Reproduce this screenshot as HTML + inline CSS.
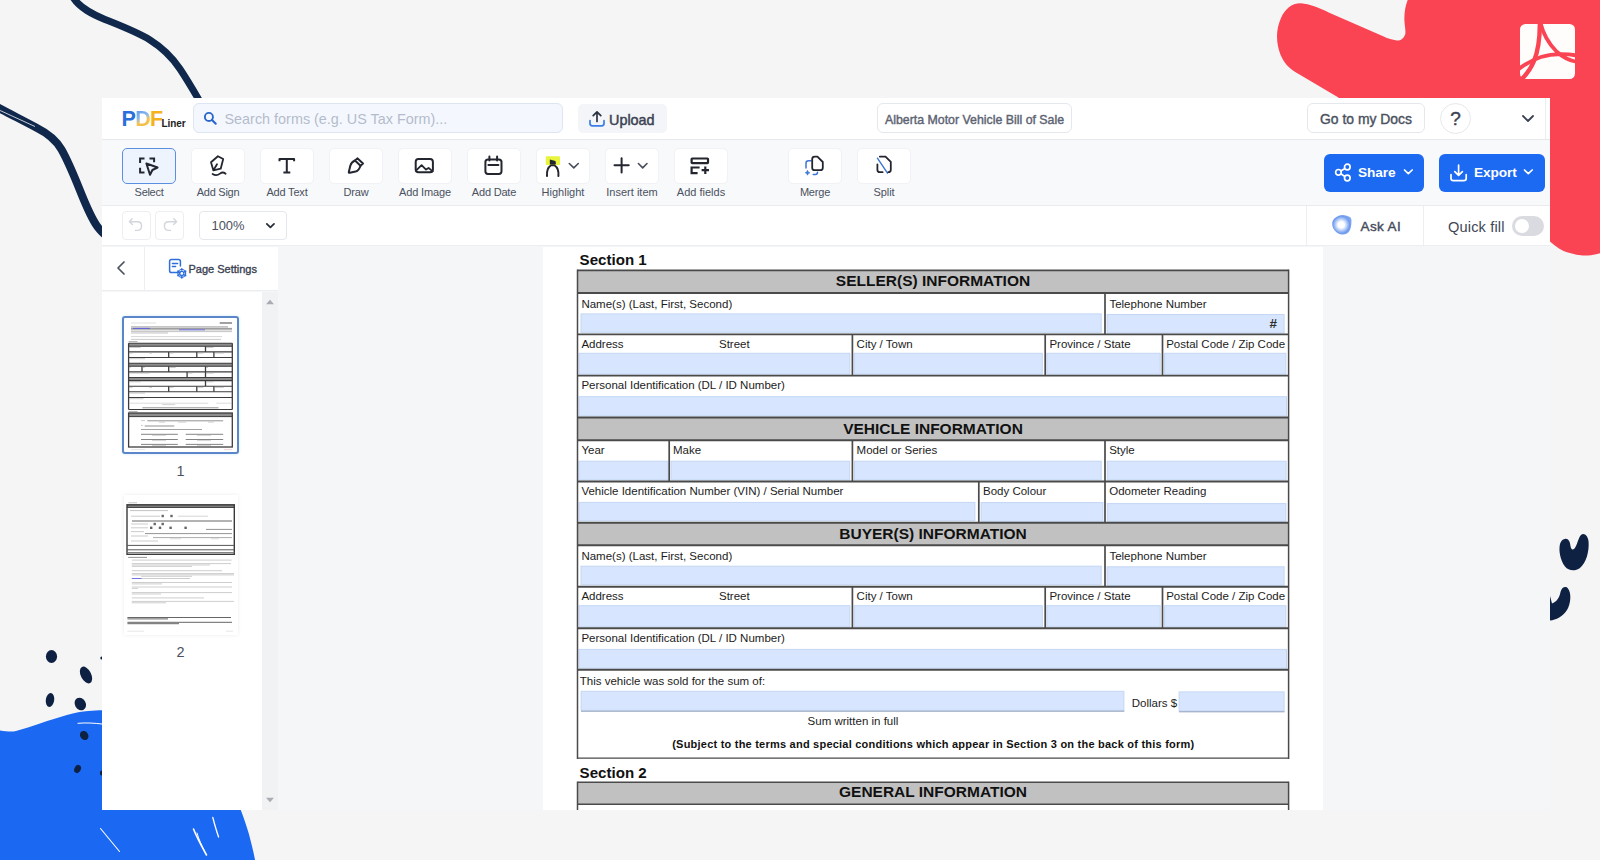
<!DOCTYPE html>
<html lang="en">
<head>
<meta charset="utf-8">
<title>Alberta Motor Vehicle Bill of Sale - PDFLiner</title>
<style>
*{box-sizing:border-box;margin:0;padding:0}
html,body{width:1600px;height:860px;overflow:hidden;background:#f5f5f5;font-family:"Liberation Sans",sans-serif;color:#3b4252}
.abs{position:absolute}
#bg{position:absolute;left:0;top:0;width:1600px;height:860px}
#app{position:absolute;left:102px;top:98px;width:1448px;height:712px;background:#f4f6f8;overflow:hidden}
#hdr{position:absolute;left:0;top:0;width:1448px;height:42px;background:#fff;border-bottom:1px solid #e6e8ec}
#tools{position:absolute;left:0;top:42px;width:1448px;height:66px;background:#f8f9fb;border-bottom:1px solid #e9ebef}
#row3{position:absolute;left:0;top:108px;width:1448px;height:40px;background:#fff;border-bottom:1px solid #eceef1}
.tb{position:absolute;top:8px;width:54px;height:36px;background:#fff;border:1px solid #f0f2f5;border-radius:5px}
.tb.sel{background:#eef4fe;border:1px solid #5b8fe0}
.tl{position:absolute;top:45.5px;width:90px;text-align:center;font-size:11px;color:#4a5160;letter-spacing:.1px}
.tb svg{position:absolute;left:0;top:0}

#logo{position:absolute;left:20px;top:9px;height:24px;white-space:nowrap}
#logo .p{position:absolute;left:-.5px;top:-.5px;font-size:21.5px;font-weight:700;letter-spacing:-.7px;line-height:24px}
#logo .l{position:absolute;left:39.5px;top:11px;font-size:10px;font-weight:700;color:#222;line-height:12px;letter-spacing:-.1px}
#search{position:absolute;left:91px;top:5px;width:370px;height:30px;background:#f4f8fe;border:1px solid #dde5f0;border-radius:6px}
#search span{position:absolute;left:30.5px;top:1px;line-height:28px;font-size:14.4px;color:#b4bccb;white-space:nowrap}
#upload{position:absolute;left:476px;top:6px;width:89px;height:29px;background:#f3f5f8;border-radius:5px}
#upload span{position:absolute;left:31px;top:1.5px;line-height:29px;font-size:14.4px;font-weight:400;color:#3b4252;-webkit-text-stroke:.45px #3b4252}
#title{position:absolute;left:775px;top:5px;width:195px;height:30px;border:1px solid #e4e7ec;border-radius:6px;background:#fff}
#title span{position:absolute;left:7px;top:2px;line-height:28px;font-size:12.35px;font-weight:400;color:#5c6372;white-space:nowrap;-webkit-text-stroke:.4px #5c6372}
#docs{position:absolute;left:1205px;top:5px;width:118px;height:30px;border:1px solid #e4e7ec;border-radius:6px;background:#fff}
#docs span{position:absolute;left:0;width:116px;text-align:center;top:.5px;line-height:28px;font-size:13.9px;font-weight:400;color:#4a5160;white-space:nowrap;-webkit-text-stroke:.4px #4a5160}
#help{position:absolute;left:1338px;top:5px;width:31px;height:31px;border:1px solid #e6e8ec;border-radius:50%;background:#fff;text-align:center;line-height:29px;font-size:19px;color:#3b4252;-webkit-text-stroke:.4px #3b4252}

.bb{position:absolute;top:14px;height:38px;background:#1c69f2;border-radius:6px}
.bb span{position:absolute;top:-.5px;line-height:37px;font-size:13.7px;font-weight:700;color:#fff;letter-spacing:-.1px}

.ur{position:absolute;top:5px;width:29px;height:29px;border:1px solid #eceef1;border-radius:4px;background:#fff}
#zoom{position:absolute;left:97px;top:5px;width:88px;height:29px;border:1px solid #e4e7ec;border-radius:4px;background:#fff}
#zoom span{position:absolute;left:11.5px;top:-.5px;line-height:27px;font-size:12.9px;color:#4a5160}
.vs{position:absolute;top:0;width:1px;height:40px;background:#eceef1}
#askai{position:absolute;left:1258.5px;top:.5px;line-height:40px;font-size:13.5px;letter-spacing:.4px;font-weight:400;color:#444b5a;-webkit-text-stroke:.4px #444b5a}
#qf{position:absolute;left:1346px;top:.5px;line-height:40px;font-size:14.6px;color:#3f4656;letter-spacing:.15px}
#tog{position:absolute;left:1410px;top:10px;width:32px;height:20px;border-radius:10px;background:#d9dbe0}
#tog i{position:absolute;left:3px;top:3px;width:14px;height:14px;border-radius:50%;background:#fff}
#side{position:absolute;left:0;top:149px;width:176px;height:563px}
#sidehdr{position:absolute;left:0;top:0;width:176px;height:44px;background:#fff;border-bottom:1px solid #eceef1}
#sidebody{position:absolute;left:0;top:45px;width:160px;height:518px;background:#fff}
#sidescroll{position:absolute;left:160px;top:45px;width:16px;height:518px;background:#f1f2f4}
#ps{position:absolute;left:86.5px;top:1px;line-height:43px;font-size:11px;font-weight:400;color:#3b4252;white-space:nowrap;-webkit-text-stroke:.35px #3b4252}
.pn{position:absolute;left:0;width:157px;text-align:center;font-size:14.5px;color:#4a5160;line-height:16px}
#main{position:absolute;left:441px;top:149px;width:780px;height:563px;background:#fff;overflow:hidden}

.fl{position:absolute;font-size:11.5px;line-height:13px;color:#1c1c1c;white-space:nowrap}
.fh{position:absolute;left:34.5px;width:711px;text-align:center;font-size:15.5px;font-weight:700;line-height:18px;color:#111;white-space:nowrap}
.fs{position:absolute;font-size:15.1px;font-weight:700;line-height:17px;color:#111;white-space:nowrap}
.fb{position:absolute;font-size:11px;font-weight:700;line-height:13px;color:#111;white-space:nowrap;letter-spacing:.225px}
</style>
</head>
<body>
<svg id="bg" viewBox="0 0 1600 860">
<path d="M73.5 -2 C80 8 92 14 105 19.5 C121 26 137 32 150 40 C166 50 174 60 180 69 C186 78 192 88 199 100" fill="none" stroke="#10284c" stroke-width="7" stroke-linecap="round"/>
<path d="M-3 107 C8 113 26 122 37 128 C47 133 56 140 61.5 149.5 C68 161 75 178 80 190.5 C85 203 92 219 97 226 C99 229 101 231 104 234" fill="none" stroke="#10284c" stroke-width="8" stroke-linecap="round"/>
<path d="M-1 110 L35 126.5" fill="none" stroke="#f5f5f5" stroke-width="0.8"/>
<path d="M1408.5 -2 C1405 6 1404 14 1404.5 22 C1405 28 1406 32 1405 35 C1403 39 1400 41 1397 40.5 C1390 39 1386 37.5 1383.7 36.4 L1328.7 12.4 C1318 7.5 1310 4 1301 3.3 C1292 3 1285 9 1281 18 C1276 29 1275.5 42 1280.6 55 C1284 63 1289 68 1294.4 71.5 L1338.4 97.6 L1338.4 130 L1550 130 L1550 241.5 C1553 244 1556 246.5 1559 248.5 C1562 250.5 1565 251.6 1568 252.4 C1573 253.8 1578 255.2 1583 255.5 C1589 255.8 1595 254.8 1602 252.6 L1602 -2 Z" fill="#fb4453"/>
<rect x="1520" y="24" width="55" height="55" rx="5.5" fill="#fffdfb"/>
<g fill="none" stroke="#fb4453" stroke-linecap="butt">
<path d="M1539.8 22 C1540 38 1538.5 50 1534 61 C1531 68.5 1526.5 74.5 1521 80" stroke-width="4.4"/>
<path d="M1540.5 23 C1543.5 35 1549 44 1556.5 51.5 C1562.5 57 1569 60.5 1577 62" stroke-width="3.8"/>
<path d="M1518.5 69.2 C1526 63.5 1533 59.5 1541 57 C1552 53.6 1564 53.4 1577 55.5" stroke-width="3.8"/>
</g>
<path d="M-2 730.3 C6 731.5 12 732 16 731 C24 729 32 726.5 40 723.6 C50 720 58 717.5 66.9 715 C75 712.8 82 711.5 88.3 711 C93 710.5 98 710.2 104 710.2 L104 808 L240 808 C244 818 246.5 826 248.7 833.3 C251 842 253.5 851 255.4 862 L-2 862 Z" fill="#1b68f3"/>
<g fill="#0e2142">
<ellipse cx="51.5" cy="656.5" rx="5.6" ry="6.4"/>
<ellipse cx="86" cy="675" rx="5.2" ry="9" transform="rotate(-27 86 675)"/>
<ellipse cx="50" cy="700" rx="4.2" ry="7" transform="rotate(8 50 700)"/>
<ellipse cx="80.3" cy="704" rx="5.4" ry="6.6" transform="rotate(-30 80.3 704)"/>
<ellipse cx="84.2" cy="735.5" rx="4" ry="4.8" transform="rotate(-35 84.2 735.5)"/>
<ellipse cx="77.6" cy="769" rx="3.2" ry="4.2" transform="rotate(25 77.6 769)"/>
<ellipse cx="101.5" cy="773" rx="1.6" ry="2.6"/>
<ellipse cx="101.5" cy="658" rx="1.2" ry="1.6"/>
<path d="M1564.7 539 C1568 538 1570 541 1570.5 546 C1571 549.5 1572.5 550.5 1574.5 548.5 C1577.5 545 1578 538 1581 535 C1584 532.5 1588 535.5 1588.6 542 C1589.3 552 1586 563 1580 568 C1575 571.5 1568.5 571 1565 566.5 C1560 560 1558.5 550 1560 544 C1561 541 1562.5 539.6 1564.7 539 Z"/>
<path d="M1550 596 L1550 620.5 C1556 620 1563 616.5 1567 610 C1571 603.5 1571.5 593 1568 588.5 C1565.5 585.5 1561.5 587.5 1560.5 592 C1559.5 597.5 1556.5 602 1552 603.5 Z"/>
</g>
<g stroke="#ffffff" fill="none" stroke-linecap="round">
<path d="M78 723.3 C86 722.6 94 723 102 724" stroke-width="1"/>
<path d="M100.5 828.5 L119.5 851.5" stroke-width="1.1"/>
<path d="M193.5 829 C197 838 202 847 206.5 855" stroke-width="1.6"/>
<path d="M197 833 C199 840 202 846 204.5 851" stroke-width="1"/>
<path d="M212.8 817.5 C214.5 824 216.5 831 218.6 837" stroke-width="1.3"/>
</g>
</svg>
<div id="app">
  <div id="hdr">
    <div id="logo"><span class="p"><span style="color:#2a6fdb">P</span><span style="background:linear-gradient(155deg,#4f8fe3 0%,#8bb8ee 42%,#f3c45a 58%,#f5b21f 100%);-webkit-background-clip:text;background-clip:text;color:transparent">D</span><span style="color:#f5b21f">F</span></span><span class="l">Liner</span></div>
    <div id="search"><svg class="abs" style="left:8.8px;top:7.2px" width="15" height="15" viewBox="0 0 16 16"><circle cx="6.3" cy="6.3" r="4.3" fill="none" stroke="#2b66cc" stroke-width="2"/><path d="M9.6 9.6 L13.6 13.6" stroke="#2b66cc" stroke-width="2.2" stroke-linecap="round"/></svg><span>Search forms (e.g. US Tax Form)...</span></div>
    <div id="upload"><svg class="abs" style="left:10px;top:6px" width="18" height="18" viewBox="0 0 18 18" fill="none" stroke-linecap="round" stroke-linejoin="round"><path d="M2 10.5 V13.5 Q2 15.8 4.3 15.8 H13.7 Q16 15.8 16 13.5 V10.5" stroke="#3b7ee6" stroke-width="1.7"/><path d="M9 11.5 V2 M5.2 5.6 L9 1.8 L12.8 5.6" stroke="#2c3140" stroke-width="1.7"/></svg><span>Upload</span></div>
    <div id="title"><span>Alberta Motor Vehicle Bill of Sale</span></div>
    <div id="docs"><span>Go to my Docs</span></div>
    <div id="help">?</div>
    <svg class="abs" style="left:1420px;top:17px" width="12" height="8" viewBox="0 0 12 8"><path d="M1 1 L6 6 L11 1" fill="none" stroke="#3b4252" stroke-width="1.8" stroke-linecap="round" stroke-linejoin="round"/></svg>
    <div class="abs" style="left:1443px;top:0;width:1px;height:41px;background:#eceef1"></div>
  </div>
  <div id="tools"><div class="tb sel" style="left:20px"><svg width="54" height="36" viewBox="0 0 54 36" fill="none" stroke="#23262f" stroke-width="2" stroke-linecap="round" stroke-linejoin="round" style="left:-1px;top:-1px"><path d="M18.1 15 V10.6 H22.5 M27.5 10.6 H32.1 V14.2 M18.1 19.8 V24.4 H22.5" stroke-linecap="butt" stroke-linejoin="miter"/><path d="M24.4 15.5 L35.6 19.5 L30.4 22 L28 26.8 Z"/></svg></div><div class="tl" style="left:2px;letter-spacing:-0.3px">Select</div><div class="tb" style="left:89px"><svg width="54" height="36" viewBox="0 0 54 36" fill="none" stroke="#23262f" stroke-width="2" stroke-linecap="round" stroke-linejoin="round" style="left:-1px;top:-1px"><path d="M26.9 8.2 L32.2 11 L29.7 20.7 L22.4 22.4 L20 14.2 Z M26 16.3 L22.4 22.4" stroke-width="1.8"/><path d="M21.6 26 C24 27.6 27 27.2 29 25.6 C30.8 24.2 33 24.4 34.6 25.7" stroke-width="1.8"/></svg></div><div class="tl" style="left:71px;letter-spacing:-0.25px">Add Sign</div><div class="tb" style="left:158px"><svg width="54" height="36" viewBox="0 0 54 36" fill="none" stroke="#23262f" stroke-width="2" stroke-linecap="round" stroke-linejoin="round" style="left:-1px;top:-1px"><path d="M19.5 13.2 V11 H34.1 V13.2 M26.8 11 V24.4 M23.4 24.4 H30.3" stroke-width="2" stroke-linecap="butt"/></svg></div><div class="tl" style="left:140px;letter-spacing:-0.2px">Add Text</div><div class="tb" style="left:227px"><svg width="54" height="36" viewBox="0 0 54 36" fill="none" stroke="#23262f" stroke-width="2" stroke-linecap="round" stroke-linejoin="round" style="left:-1px;top:-1px"><path d="M28.6 10.4 L34 15.5 L31.5 17.7 L26 12.5 Z"/><path d="M26 12.5 C23.3 13.6 22 15.5 21.4 17.6 L19.8 23.9 Q19.6 25 20.8 24.8 L26.6 23.6 C29 22.8 30.6 20.6 31.5 17.7"/></svg></div><div class="tl" style="left:209px;letter-spacing:-0.2px">Draw</div><div class="tb" style="left:296px"><svg width="54" height="36" viewBox="0 0 54 36" fill="none" stroke="#23262f" stroke-width="2" stroke-linecap="round" stroke-linejoin="round" style="left:-1px;top:-1px"><rect x="17.7" y="10.9" width="17.2" height="13.4" rx="2.8"/><path d="M18.2 22.4 L23.6 17.1 L28 21.6 M28 21.6 L30.6 19.9 L34.6 23.4" stroke-width="1.8"/></svg></div><div class="tl" style="left:278px;letter-spacing:-0.15px">Add Image</div><div class="tb" style="left:365px"><svg width="54" height="36" viewBox="0 0 54 36" fill="none" stroke="#23262f" stroke-width="2" stroke-linecap="round" stroke-linejoin="round" style="left:-1px;top:-1px"><rect x="18.4" y="11.5" width="16.1" height="14.4" rx="2.6"/><path d="M22.4 8.4 V12.6 M30.1 8.4 V12.6 M21.4 17.1 H31.4"/></svg></div><div class="tl" style="left:347px;letter-spacing:-0.2px">Add Date</div><div class="tb" style="left:434px"><svg width="54" height="36" viewBox="0 0 54 36" fill="none" stroke="#23262f" stroke-width="2" stroke-linecap="round" stroke-linejoin="round" style="left:-1px;top:-1px"><rect x="9.8" y="8.2" width="14.2" height="8.9" rx="1" fill="#e9f53c" stroke="none"/><path d="M13.8 11.6 L19.5 13 L20 16.2 H13.8 Z" fill="#23262f" stroke="none"/><path d="M11 28 C10.5 22 13 18.6 15 17.2 L18.5 17.2 C20.5 18.6 23 22 22.4 28"/><path d="M33.3 15.5 L37.8 19.9 L42.3 15.5" stroke-width="1.6" stroke="#4a4e5a"/></svg></div><div class="tl" style="left:416px;letter-spacing:0px">Highlight</div><div class="tb" style="left:503px"><svg width="54" height="36" viewBox="0 0 54 36" fill="none" stroke="#23262f" stroke-width="2" stroke-linecap="round" stroke-linejoin="round" style="left:-1px;top:-1px"><path d="M9.5 17.3 H23.7 M16.6 10.2 V24.4"/><path d="M33.4 15.5 L37.7 19.9 L42 15.5" stroke-width="1.6" stroke="#4a4e5a"/></svg></div><div class="tl" style="left:485px;letter-spacing:0px">Insert item</div><div class="tb" style="left:572px"><svg width="54" height="36" viewBox="0 0 54 36" fill="none" stroke="#23262f" stroke-width="2" stroke-linecap="round" stroke-linejoin="round" style="left:-1px;top:-1px"><rect x="17.6" y="10.5" width="16.4" height="4.6" rx=".6" stroke-width="2.2"/><path d="M25.6 19.5 H17.6 V25.2 H23.6 M27.6 22.2 H35 M31.3 18.5 V25.9" stroke-width="2.2" stroke-linecap="butt" stroke-linejoin="miter"/></svg></div><div class="tl" style="left:554px;letter-spacing:0px">Add fields</div><div class="tb" style="left:686px"><svg width="54" height="36" viewBox="0 0 54 36" fill="none" stroke="#23262f" stroke-width="2" stroke-linecap="round" stroke-linejoin="round" style="left:-1px;top:-1px"><path d="M23 12.8 H20.5 Q18 12.8 18 15.3 V20 M25.2 26.4 H27.5 Q29.5 26.4 29.5 24.2" stroke="#3f76d6" stroke-width="1.5"/><path d="M19.5 22.4 L20.3 24 L21.9 24.8 L20.3 25.6 L19.5 27.2 L18.7 25.6 L17.1 24.8 L18.7 24 Z" fill="#3f76d6" stroke="#3f76d6" stroke-width=".6"/><path d="M26.7 8.6 H29.4 L34.8 14 V19.7 Q34.8 22.2 32.3 22.2 H26.7 Q24.2 22.2 24.2 19.7 V11.1 Q24.2 8.6 26.7 8.6 Z" fill="#fff" stroke-width="1.8"/></svg></div><div class="tl" style="left:668px;letter-spacing:-0.2px">Merge</div><div class="tb" style="left:755px"><svg width="54" height="36" viewBox="0 0 54 36" fill="none" stroke="#23262f" stroke-width="2" stroke-linecap="round" stroke-linejoin="round" style="left:-1px;top:-1px"><path d="M20.4 10.2 L30.5 25.2" stroke="#3f76d6" stroke-width="1.4"/><path stroke-width="1.8" d="M20.4 16.3 V21.7 Q20.4 24.2 23 24.2 H25.6 M22.8 8.6 H28.5 L33.8 13.8 V21.7 Q33.8 24.2 31.3 24.2"/></svg></div><div class="tl" style="left:737px;letter-spacing:-0.1px">Split</div><div class="bb" style="left:1222px;width:100px"><svg class="abs" style="left:9px;top:8px" width="22" height="22" viewBox="0 0 22 22" fill="none" stroke="#fff" stroke-width="1.7"><circle cx="14.3" cy="5" r="2.8"/><circle cx="5.4" cy="10.3" r="2.8"/><circle cx="14.3" cy="16" r="2.8"/><path d="M7.8 8.9 L11.9 6.4 M7.8 11.8 L11.9 14.5"/></svg><span style="left:34px">Share</span><svg class="abs" style="left:79px;top:14px" width="11" height="8" viewBox="0 0 11 8"><path d="M1.5 2 L5.3 5.7 L9.2 2" fill="none" stroke="#fff" stroke-width="1.7" stroke-linecap="round" stroke-linejoin="round"/></svg></div>
<div class="bb" style="left:1337px;width:106px"><svg class="abs" style="left:10px;top:8px" width="20" height="22" viewBox="0 0 20 22" fill="none" stroke="#fff" stroke-width="1.7" stroke-linecap="round" stroke-linejoin="round"><path d="M2 12.5 V16.2 Q2 18.6 4.4 18.6 H14.8 Q17.2 18.6 17.2 16.2 V12.5"/><path d="M9.6 3 V13.2 M5.8 9.6 L9.6 13.4 L13.4 9.6"/></svg><span style="left:35px">Export</span><svg class="abs" style="left:84px;top:14px" width="11" height="8" viewBox="0 0 11 8"><path d="M1.5 2 L5.3 5.7 L9.2 2" fill="none" stroke="#fff" stroke-width="1.7" stroke-linecap="round" stroke-linejoin="round"/></svg></div></div>
  <div id="row3">
    <div class="ur" style="left:20px"><svg width="27" height="27" viewBox="0 0 27 27" fill="none" stroke="#d3d6dc" stroke-width="1.4" stroke-linecap="round" stroke-linejoin="round"><path d="M9.2 6.8 L6.4 9.8 L9.4 12.6 M6.8 9.8 H14.6 Q18.6 9.8 18.6 14 Q18.6 18.4 14.4 18.4 H12.4"/></svg></div>
    <div class="ur" style="left:53px"><svg width="27" height="27" viewBox="0 0 27 27" fill="none" stroke="#d3d6dc" stroke-width="1.4" stroke-linecap="round" stroke-linejoin="round"><path d="M17.8 6.8 L20.6 9.8 L17.6 12.6 M20.2 9.8 H12.4 Q8.4 9.8 8.4 14 Q8.4 18.4 12.6 18.4 H14.6"/></svg></div>
    <div id="zoom"><span>100%</span><svg class="abs" style="left:65px;top:10px" width="12" height="8" viewBox="0 0 12 8"><path d="M1.8 1.9 L5.4 5.4 L9 1.9" fill="none" stroke="#2b2f3a" stroke-width="1.8" stroke-linecap="round" stroke-linejoin="round"/></svg></div>
    <div class="vs" style="left:1204px"></div><div class="vs" style="left:1321px"></div>
    <svg class="abs" style="left:1228px;top:7px" width="24" height="24" viewBox="0 0 24 24"><defs><radialGradient id="ai" cx="47%" cy="50%" r="52%"><stop offset="0" stop-color="#ffffff"/><stop offset=".3" stop-color="#ffffff"/><stop offset=".62" stop-color="#a9c4f6"/><stop offset=".84" stop-color="#6d9aee"/><stop offset="1" stop-color="#7fa6f0"/></radialGradient><filter id="aib" x="-10%" y="-10%" width="120%" height="120%"><feGaussianBlur stdDeviation=".45"/></filter></defs><path filter="url(#aib)" d="M8.2 2.9 C11.6 1.2 17.2 2 20.6 4.6 C21.8 6.4 21.6 9 21.2 12 C20.8 15.6 19.8 18.8 17 20.6 C13.8 22.4 9.2 21.4 6.4 19.2 C3.2 16.8 1.8 13.4 2.2 9.6 C2.6 6.6 5 4.4 8.2 2.9 Z" fill="url(#ai)"/></svg>
    <div id="askai">Ask AI</div>
    <div id="qf">Quick fill</div>
    <div id="tog"><i></i></div>
  </div>
  <div id="side">
    <div id="sidehdr">
      <svg class="abs" style="left:13px;top:13px" width="12" height="16" viewBox="0 0 12 16"><path d="M9 2 L3 8 L9 14" fill="none" stroke="#4a5160" stroke-width="1.7" stroke-linecap="round" stroke-linejoin="round"/></svg>
      <div class="abs" style="left:42px;top:0;width:1px;height:44px;background:#eceef1"></div>
      <svg class="abs" style="left:65px;top:11px" width="22" height="22" viewBox="0 0 22 22" fill="none" stroke="#2f6fdc" stroke-width="1.5" stroke-linecap="round" stroke-linejoin="round"><path d="M13 14.6 H4.4 Q2.6 14.6 2.6 12.8 V3.4 Q2.6 1.6 4.4 1.6 H11.6 Q13.4 1.6 13.4 3.4 V8"/><path d="M5.4 5.4 H10.6 M5.4 8.6 H8.6"/><circle cx="14.8" cy="15.4" r="2.1" stroke-width="1.3"/><path d="M14.8 10.9 V12 M14.8 18.8 V19.9 M10.9 13.2 L11.9 13.8 M17.7 17 L18.7 17.6 M10.9 17.6 L11.9 17 M17.7 13.8 L18.7 13.2" stroke-width="1.6"/><circle cx="14.8" cy="15.4" r="3.9" stroke-width="1.2"/></svg>
      <div id="ps">Page Settings</div>
    </div>
    <div id="sidebody"><!--TH--><div class="abs" style="left:20px;top:24px;width:117px;height:138px;border:2px solid #5b87c8;border-radius:3px;box-shadow:0 0 3px rgba(120,200,230,.35);background:#fff"></div>
<svg class="abs" style="left:0;top:0" width="160" height="200" viewBox="0 0 160 200" fill="none"><rect x="26.6" y="51.2" width="103.7" height="3.1" fill="#8d8d8d"/><rect x="26.6" y="71.2" width="103.7" height="3.1" fill="#8d8d8d"/><rect x="26.6" y="85.5" width="103.7" height="3.1" fill="#8d8d8d"/><path d="M26.6 51.2 H130.3" stroke="#3c3c3c" stroke-width="1.1"/><path d="M26.6 54.3 H130.3" stroke="#3c3c3c" stroke-width="1.1"/><path d="M26.6 59.9 H130.3" stroke="#3c3c3c" stroke-width="1.1"/><path d="M26.6 65.5 H130.3" stroke="#3c3c3c" stroke-width="1.1"/><path d="M26.6 71.2 H130.3" stroke="#3c3c3c" stroke-width="1.1"/><path d="M26.6 74.3 H130.3" stroke="#3c3c3c" stroke-width="1.1"/><path d="M26.6 79.9 H130.3" stroke="#3c3c3c" stroke-width="1.1"/><path d="M26.6 85.5 H130.3" stroke="#3c3c3c" stroke-width="1.1"/><path d="M26.6 88.6 H130.3" stroke="#3c3c3c" stroke-width="1.1"/><path d="M26.6 94.2 H130.3" stroke="#3c3c3c" stroke-width="1.1"/><path d="M26.6 99.8 H130.3" stroke="#3c3c3c" stroke-width="1.1"/><path d="M26.6 105.5 H130.3" stroke="#3c3c3c" stroke-width="1.1"/><path d="M26.6 117.5 H130.3" stroke="#3c3c3c" stroke-width="1.1"/><path d="M26.6 51.2 V117.5" stroke="#3c3c3c" stroke-width="1.3"/><path d="M130.3 51.2 V117.5" stroke="#3c3c3c" stroke-width="1.3"/><path d="M103.5 54.3 V59.9" stroke="#3c3c3c" stroke-width="1.3"/><path d="M103.5 88.6 V94.2" stroke="#3c3c3c" stroke-width="1.3"/><path d="M66.7 59.9 V65.5" stroke="#3c3c3c" stroke-width="1.3"/><path d="M94.8 59.9 V65.5" stroke="#3c3c3c" stroke-width="1.3"/><path d="M111.9 59.9 V65.5" stroke="#3c3c3c" stroke-width="1.3"/><path d="M66.7 94.2 V99.8" stroke="#3c3c3c" stroke-width="1.3"/><path d="M94.8 94.2 V99.8" stroke="#3c3c3c" stroke-width="1.3"/><path d="M111.9 94.2 V99.8" stroke="#3c3c3c" stroke-width="1.3"/><path d="M40.0 74.3 V79.9" stroke="#3c3c3c" stroke-width="1.3"/><path d="M66.7 74.3 V79.9" stroke="#3c3c3c" stroke-width="1.3"/><path d="M103.5 74.3 V79.9" stroke="#3c3c3c" stroke-width="1.3"/><path d="M85.1 79.9 V85.5" stroke="#3c3c3c" stroke-width="1.3"/><path d="M103.5 79.9 V85.5" stroke="#3c3c3c" stroke-width="1.3"/><path d="M27.1 55.5 H38.6" stroke="#a8a8a8" stroke-width="0.6"/><path d="M104.1 55.5 H111.5" stroke="#a8a8a8" stroke-width="0.6"/><path d="M27.1 61.1 H30.6" stroke="#a8a8a8" stroke-width="0.6"/><path d="M47.2 61.1 H50.0" stroke="#a8a8a8" stroke-width="0.6"/><path d="M67.4 61.1 H71.4" stroke="#a8a8a8" stroke-width="0.6"/><path d="M95.3 61.1 H101.3" stroke="#a8a8a8" stroke-width="0.6"/><path d="M112.4 61.1 H121.7" stroke="#a8a8a8" stroke-width="0.6"/><path d="M27.1 66.7 H43.0" stroke="#a8a8a8" stroke-width="0.6"/><path d="M27.1 75.5 H28.7" stroke="#a8a8a8" stroke-width="0.6"/><path d="M40.5 75.5 H42.7" stroke="#a8a8a8" stroke-width="0.6"/><path d="M67.4 75.5 H73.6" stroke="#a8a8a8" stroke-width="0.6"/><path d="M104.1 75.5 H106.0" stroke="#a8a8a8" stroke-width="0.6"/><path d="M27.1 81.1 H47.4" stroke="#a8a8a8" stroke-width="0.6"/><path d="M85.7 81.1 H90.4" stroke="#a8a8a8" stroke-width="0.6"/><path d="M104.1 81.1 H111.5" stroke="#a8a8a8" stroke-width="0.6"/><path d="M27.1 89.8 H38.6" stroke="#a8a8a8" stroke-width="0.6"/><path d="M104.1 89.8 H111.5" stroke="#a8a8a8" stroke-width="0.6"/><path d="M27.1 95.4 H30.6" stroke="#a8a8a8" stroke-width="0.6"/><path d="M47.2 95.4 H50.0" stroke="#a8a8a8" stroke-width="0.6"/><path d="M67.4 95.4 H71.4" stroke="#a8a8a8" stroke-width="0.6"/><path d="M95.3 95.4 H101.3" stroke="#a8a8a8" stroke-width="0.6"/><path d="M112.4 95.4 H121.7" stroke="#a8a8a8" stroke-width="0.6"/><path d="M27.1 101.1 H43.0" stroke="#a8a8a8" stroke-width="0.6"/><path d="M27.1 106.7 H41.5" stroke="#a8a8a8" stroke-width="0.6"/><path d="M27.1 111.2 H106.3" stroke="#b5b5b5" stroke-width="0.5"/><path d="M114.3 111.2 H129.6" stroke="#b5b5b5" stroke-width="0.5"/><path d="M60.2 112.6 H73.2" stroke="#a8a8a8" stroke-width="0.5"/><path d="M40.4 115.8 H116.5" stroke="#666" stroke-width="0.7"/><path d="M26.6 49.6 h9" stroke="#777" stroke-width=".6"/><path d="M26.6 119.6 h9" stroke="#777" stroke-width=".6"/><rect x="26.6" y="121.0" width="103.7" height="3.6" fill="#8d8d8d"/><rect x="26.6" y="121.0" width="103.7" height="34.0" fill="none" stroke="#3c3c3c" stroke-width="1.3"/><path d="M26.6 124.6 H130.3" stroke="#3c3c3c" stroke-width="1"/><path d="M45.3 128.8 H121.2" stroke="#777" stroke-width="0.8"/><path d="M39.0 128.6 H43.0" stroke="#a8a8a8" stroke-width="0.6"/><path d="M57.0 130.2 H63.0" stroke="#a8a8a8" stroke-width="0.5"/><path d="M76.0 130.2 H84.0" stroke="#a8a8a8" stroke-width="0.5"/><path d="M106.0 130.2 H112.0" stroke="#a8a8a8" stroke-width="0.5"/><path d="M42.7 134.0 H72.3" stroke="#777" stroke-width="0.8"/><path d="M39.0 133.4 H41.0" stroke="#a8a8a8" stroke-width="0.6"/><path d="M39.0 137.5 H100.0" stroke="#8a8a8a" stroke-width="0.8"/><path d="M39.0 142.3 H75.8" stroke="#777" stroke-width="0.9"/><path d="M83.7 142.3 H121.2" stroke="#777" stroke-width="0.9"/><path d="M50.0 143.4 H64.0" stroke="#a8a8a8" stroke-width="0.5"/><path d="M95.0 143.4 H109.0" stroke="#a8a8a8" stroke-width="0.5"/><path d="M39.0 147.5 H75.8" stroke="#777" stroke-width="0.9"/><path d="M83.7 147.5 H121.2" stroke="#777" stroke-width="0.9"/><path d="M50.0 148.6 H64.0" stroke="#a8a8a8" stroke-width="0.5"/><path d="M95.0 148.6 H109.0" stroke="#a8a8a8" stroke-width="0.5"/><path d="M39.0 152.4 H75.8" stroke="#777" stroke-width="0.9"/><path d="M83.7 152.4 H121.2" stroke="#777" stroke-width="0.9"/><path d="M50.0 153.5 H64.0" stroke="#a8a8a8" stroke-width="0.5"/><path d="M95.0 153.5 H109.0" stroke="#a8a8a8" stroke-width="0.5"/><path d="M117.7 31.0 H130.0" stroke="#555" stroke-width="1.1"/><path d="M29.0 31.0 H54.0" stroke="#c9c9c9" stroke-width="0.6"/><path d="M29.0 34.9 H126.0" stroke="#777" stroke-width="0.7"/><path d="M29.0 36.4 H130.0" stroke="#666" stroke-width="0.7"/><path d="M29.0 37.8 H130.0" stroke="#777" stroke-width="0.7"/><path d="M29.0 39.6 H130.0" stroke="#aaa" stroke-width="0.7"/><path d="M29.0 41.0 H66.0" stroke="#aaa" stroke-width="0.7"/><path d="M29.0 44.6 H120.0" stroke="#c4c4c4" stroke-width="0.7"/><path d="M29.0 47.4 H119.0" stroke="#b4b4b4" stroke-width="0.7"/><path d="M31.0 36.4 H48.0" stroke="#5a5ae0" stroke-width="0.9"/><path d="M77.0 37.8 H103.0" stroke="#6a6ae8" stroke-width="0.9"/><path d="M29.0 157.6 H43.0" stroke="#ccc" stroke-width="0.5"/><path d="M122.0 157.6 H130.0" stroke="#e4b0b0" stroke-width="0.5"/></svg>
<div class="pn" style="top:171px">1</div>
<div class="abs" style="left:22px;top:203px;width:114px;height:140px;background:#fff;box-shadow:0 0 4px rgba(0,0,0,.08)"></div>
<svg class="abs" style="left:0;top:190px" width="160" height="180" viewBox="0 190 160 180" fill="none"><rect x="25.0" y="212.8" width="107.3" height="2.7" fill="#7d7d7d"/><rect x="25.0" y="212.8" width="107.3" height="49.5" fill="none" stroke="#3a3a3a" stroke-width="1.4"/><path d="M25.0 215.5 H132.3" stroke="#3a3a3a" stroke-width="0.9"/><path d="M25.0 253.4 H132.3" stroke="#555" stroke-width="1"/><path d="M25.0 257.8 H132.3" stroke="#555" stroke-width="1"/><path d="M25.0 260.6 H132.3" stroke="#777" stroke-width="1"/><path d="M30.0 229.0 H130.0" stroke="#666" stroke-width="1"/><path d="M104.0 237.4 H130.0" stroke="#777" stroke-width="0.8"/><path d="M43.0 241.6 H130.0" stroke="#777" stroke-width="0.8"/><path d="M51.0 245.6 H130.0" stroke="#888" stroke-width="0.7"/><path d="M28.0 218.6 H66.0" stroke="#999" stroke-width="0.6"/><path d="M29.0 224.2 H58.0" stroke="#aaa" stroke-width="0.6"/><path d="M76.0 224.2 H106.0" stroke="#bbb" stroke-width="0.6"/><path d="M29.0 232.0 H46.0" stroke="#aaa" stroke-width="0.6"/><path d="M29.0 235.8 H46.0" stroke="#aaa" stroke-width="0.6"/><path d="M29.0 239.6 H42.0" stroke="#aaa" stroke-width="0.6"/><path d="M29.0 244.0 H46.0" stroke="#aaa" stroke-width="0.6"/><path d="M29.0 249.0 H56.0" stroke="#aaa" stroke-width="0.6"/><path d="M68.0 246.8 H79.0" stroke="#bbb" stroke-width="0.5"/><path d="M109.0 246.8 H117.0" stroke="#bbb" stroke-width="0.5"/><rect x="59.5" y="222.8" width="2.4" height="2.4" fill="#666"/><rect x="68.3" y="222.8" width="2.4" height="2.4" fill="#666"/><rect x="51.5" y="230.8" width="2.4" height="2.4" fill="#666"/><rect x="59.5" y="230.8" width="2.4" height="2.4" fill="#666"/><rect x="48.0" y="234.6" width="2.4" height="2.4" fill="#666"/><rect x="56.8" y="234.6" width="2.4" height="2.4" fill="#666"/><rect x="67.4" y="234.6" width="2.4" height="2.4" fill="#666"/><rect x="82.4" y="234.6" width="2.4" height="2.4" fill="#666"/><path d="M26.2 265.4 H45.0" stroke="#777" stroke-width="0.8"/><path d="M29.8 268.1 H129.6" stroke="#b9b9b9" stroke-width="0.7"/><path d="M29.8 271.6 H129.0" stroke="#b9b9b9" stroke-width="0.7"/><path d="M29.8 273.0 H108.0" stroke="#b9b9b9" stroke-width="0.7"/><path d="M29.8 274.4 H90.0" stroke="#b9b9b9" stroke-width="0.7"/><path d="M29.8 278.7 H120.0" stroke="#b9b9b9" stroke-width="0.7"/><path d="M29.8 281.6 H132.0" stroke="#b9b9b9" stroke-width="0.7"/><path d="M29.8 282.9 H132.0" stroke="#b9b9b9" stroke-width="0.7"/><path d="M39.0 284.3 H90.0" stroke="#b9b9b9" stroke-width="0.7"/><path d="M29.8 286.5 H88.0" stroke="#b9b9b9" stroke-width="0.7"/><path d="M29.8 290.5 H130.0" stroke="#b9b9b9" stroke-width="0.7"/><path d="M29.8 291.9 H60.0" stroke="#b9b9b9" stroke-width="0.7"/><path d="M29.8 295.0 H130.0" stroke="#b9b9b9" stroke-width="0.7"/><path d="M29.8 296.4 H36.0" stroke="#b9b9b9" stroke-width="0.7"/><path d="M29.8 300.6 H130.0" stroke="#b9b9b9" stroke-width="0.7"/><path d="M29.8 302.0 H59.0" stroke="#b9b9b9" stroke-width="0.7"/><path d="M29.8 305.9 H102.0" stroke="#b9b9b9" stroke-width="0.7"/><path d="M29.8 309.4 H132.0" stroke="#b9b9b9" stroke-width="0.7"/><path d="M29.8 310.8 H64.0" stroke="#b9b9b9" stroke-width="0.7"/><path d="M29.8 286.5 H39.5" stroke="#6a6ae8" stroke-width="0.9"/><path d="M25.4 325.5 H129.0" stroke="#555" stroke-width="0.9"/><path d="M25.4 326.9 H66.0" stroke="#555" stroke-width="0.9"/><path d="M25.4 330.3 H130.0" stroke="#555" stroke-width="0.9"/><path d="M25.4 331.7 H77.0" stroke="#555" stroke-width="0.9"/><path d="M25.4 339.2 H42.0" stroke="#ccc" stroke-width="0.5"/><path d="M124.0 339.2 H131.0" stroke="#ccc" stroke-width="0.5"/><path d="M26.5 210.8 H35.0" stroke="#999" stroke-width="0.6"/></svg>
<div class="pn" style="top:352px">2</div><!--/TH--></div>
    <div id="sidescroll"><svg class="abs" style="left:3px;top:7px" width="10" height="6" viewBox="0 0 10 6"><path d="M1 5.2 L5 0.8 L9 5.2 Z" fill="#a9acb3"/></svg><svg class="abs" style="left:3px;top:505px" width="10" height="6" viewBox="0 0 10 6"><path d="M1 0.8 L5 5.2 L9 0.8 Z" fill="#a9acb3"/></svg></div>
  </div>
  <!--FORM--><div id="main">
<svg class="abs" style="left:0;top:0" width="780" height="563" viewBox="0 0 780 563" fill="none"><rect x="34.5" y="23.4" width="711.1" height="22.6" fill="#c1c1c1"/><rect x="34.5" y="170.5" width="711.1" height="22.8" fill="#c1c1c1"/><rect x="34.5" y="275.8" width="711.1" height="22.5" fill="#c1c1c1"/><rect x="34.5" y="535.3" width="711.1" height="21.9" fill="#c1c1c1"/><rect x="38.0" y="66.9" width="520.2" height="18.4" fill="#d7e6fe" stroke="#c3d6f4" stroke-width="1"/><rect x="564.1" y="67.5" width="177.0" height="18.4" fill="#d7e6fe" stroke="#c3d6f4" stroke-width="1"/><rect x="36.1" y="106.3" width="270.8" height="20.8" fill="#d7e6fe" stroke="#c3d6f4" stroke-width="1"/><rect x="311.3" y="106.3" width="188.0" height="20.8" fill="#d7e6fe" stroke="#c3d6f4" stroke-width="1"/><rect x="503.9" y="106.3" width="113.3" height="20.8" fill="#d7e6fe" stroke="#c3d6f4" stroke-width="1"/><rect x="621.6" y="106.3" width="121.3" height="20.8" fill="#d7e6fe" stroke="#c3d6f4" stroke-width="1"/><rect x="36.1" y="149.7" width="707.4" height="19.3" fill="#d7e6fe" stroke="#c3d6f4" stroke-width="1"/><rect x="38.0" y="319.2" width="520.2" height="18.5" fill="#d7e6fe" stroke="#c3d6f4" stroke-width="1"/><rect x="564.1" y="319.8" width="177.0" height="18.5" fill="#d7e6fe" stroke="#c3d6f4" stroke-width="1"/><rect x="36.1" y="358.7" width="270.8" height="21.1" fill="#d7e6fe" stroke="#c3d6f4" stroke-width="1"/><rect x="311.3" y="358.7" width="188.0" height="21.1" fill="#d7e6fe" stroke="#c3d6f4" stroke-width="1"/><rect x="503.9" y="358.7" width="113.3" height="21.1" fill="#d7e6fe" stroke="#c3d6f4" stroke-width="1"/><rect x="621.6" y="358.7" width="121.3" height="21.1" fill="#d7e6fe" stroke="#c3d6f4" stroke-width="1"/><rect x="36.1" y="402.4" width="707.4" height="18.8" fill="#d7e6fe" stroke="#c3d6f4" stroke-width="1"/><rect x="35.9" y="214.2" width="89.2" height="18.8" fill="#d7e6fe" stroke="#c3d6f4" stroke-width="1"/><rect x="128.1" y="214.2" width="178.6" height="18.8" fill="#d7e6fe" stroke="#c3d6f4" stroke-width="1"/><rect x="311.5" y="214.2" width="246.7" height="18.8" fill="#d7e6fe" stroke="#c3d6f4" stroke-width="1"/><rect x="564.3" y="214.2" width="178.8" height="18.8" fill="#d7e6fe" stroke="#c3d6f4" stroke-width="1"/><rect x="36.1" y="255.4" width="395.8" height="18.3" fill="#d7e6fe" stroke="#c3d6f4" stroke-width="1"/><rect x="438.1" y="255.6" width="121.8" height="18.7" fill="#d7e6fe" stroke="#c3d6f4" stroke-width="1"/><rect x="564.3" y="256.6" width="178.6" height="17.7" fill="#d7e6fe" stroke="#c3d6f4" stroke-width="1"/><rect x="38.1" y="444.3" width="542.8" height="19.0" fill="#d7e6fe" stroke="#c3d6f4" stroke-width="1"/><path d="M38 464.20000000000005 H581.4000000000001" stroke="#8f9db8" stroke-width="1"/><rect x="636.1" y="444.9" width="105.0" height="19.0" fill="#d7e6fe" stroke="#c3d6f4" stroke-width="1"/><path d="M636 464.79999999999995 H741.5999999999999" stroke="#8f9db8" stroke-width="1"/><path d="M34.5 23.4 H745.6" stroke="#4a4a4a" stroke-width="1.9"/><path d="M34.5 46.0 H745.6" stroke="#4a4a4a" stroke-width="1.9"/><path d="M34.5 87.4 H745.6" stroke="#4a4a4a" stroke-width="1.9"/><path d="M34.5 128.6 H745.6" stroke="#4a4a4a" stroke-width="1.9"/><path d="M34.5 170.5 H745.6" stroke="#4a4a4a" stroke-width="1.9"/><path d="M34.5 193.3 H745.6" stroke="#4a4a4a" stroke-width="1.9"/><path d="M34.5 234.5 H745.6" stroke="#4a4a4a" stroke-width="1.9"/><path d="M34.5 275.8 H745.6" stroke="#4a4a4a" stroke-width="1.9"/><path d="M34.5 298.3 H745.6" stroke="#4a4a4a" stroke-width="1.9"/><path d="M34.5 339.8 H745.6" stroke="#4a4a4a" stroke-width="1.9"/><path d="M34.5 381.3 H745.6" stroke="#4a4a4a" stroke-width="1.9"/><path d="M34.5 422.7 H745.6" stroke="#4a4a4a" stroke-width="1.9"/><path d="M34.5 511.2 H745.6" stroke="#4a4a4a" stroke-width="1.2"/><path d="M34.5 535.3 H745.6" stroke="#4a4a4a" stroke-width="1.6"/><path d="M34.5 557.2 H745.6" stroke="#4a4a4a" stroke-width="1.6"/><path d="M34.5 22.5 V512.0" stroke="#4a4a4a" stroke-width="1.5"/><path d="M745.6 22.5 V512.0" stroke="#4a4a4a" stroke-width="1.5"/><path d="M34.5 534.6 V565.0" stroke="#4a4a4a" stroke-width="1.5"/><path d="M745.6 534.6 V565.0" stroke="#4a4a4a" stroke-width="1.5"/><path d="M562.0 46.0 V87.4" stroke="#4a4a4a" stroke-width="1.7"/><path d="M562.0 298.3 V339.8" stroke="#4a4a4a" stroke-width="1.7"/><path d="M309.4 87.4 V128.6" stroke="#4a4a4a" stroke-width="1.7"/><path d="M502.2 87.4 V128.6" stroke="#4a4a4a" stroke-width="1.7"/><path d="M619.5 87.4 V128.6" stroke="#4a4a4a" stroke-width="1.7"/><path d="M309.4 339.8 V381.3" stroke="#4a4a4a" stroke-width="1.7"/><path d="M502.2 339.8 V381.3" stroke="#4a4a4a" stroke-width="1.7"/><path d="M619.5 339.8 V381.3" stroke="#4a4a4a" stroke-width="1.7"/><path d="M126.2 193.3 V234.5" stroke="#4a4a4a" stroke-width="1.7"/><path d="M309.4 193.3 V234.5" stroke="#4a4a4a" stroke-width="1.7"/><path d="M562.0 193.3 V234.5" stroke="#4a4a4a" stroke-width="1.7"/><path d="M435.8 234.5 V275.8" stroke="#4a4a4a" stroke-width="1.7"/><path d="M562.0 234.5 V275.8" stroke="#4a4a4a" stroke-width="1.7"/></svg>
<div class="fh" style="top:25.3px">SELLER(S) INFORMATION</div>
<div class="fh" style="top:173.2px">VEHICLE INFORMATION</div>
<div class="fh" style="top:278.4px">BUYER(S) INFORMATION</div>
<div class="fh" style="top:535.5px">GENERAL INFORMATION</div>
<div class="fs" style="left:36.6px;top:4.1px">Section 1</div>
<div class="fs" style="left:36.6px;top:516.8px">Section 2</div>
<div class="fl" style="left:38.4px;top:50.5px">Name(s) (Last, First, Second)</div>
<div class="fl" style="left:566.4px;top:50.5px">Telephone Number</div>
<div class="fl" style="left:38.4px;top:302.8px">Name(s) (Last, First, Second)</div>
<div class="fl" style="left:566.4px;top:302.8px">Telephone Number</div>
<div class="fl" style="left:38.4px;top:90.7px">Address</div>
<div class="fl" style="left:176.0px;top:90.7px">Street</div>
<div class="fl" style="left:313.6px;top:90.7px">City / Town</div>
<div class="fl" style="left:506.4px;top:90.7px">Province / State</div>
<div class="fl" style="left:623.2px;top:90.7px">Postal Code / Zip Code</div>
<div class="fl" style="left:38.4px;top:343.1px">Address</div>
<div class="fl" style="left:176.0px;top:343.1px">Street</div>
<div class="fl" style="left:313.6px;top:343.1px">City / Town</div>
<div class="fl" style="left:506.4px;top:343.1px">Province / State</div>
<div class="fl" style="left:623.2px;top:343.1px">Postal Code / Zip Code</div>
<div class="fl" style="left:38.4px;top:131.9px">Personal Identification (DL / ID Number)</div>
<div class="fl" style="left:38.4px;top:384.6px">Personal Identification (DL / ID Number)</div>
<div class="fl" style="left:38.4px;top:197.0px">Year</div>
<div class="fl" style="left:130.0px;top:197.0px">Make</div>
<div class="fl" style="left:313.6px;top:197.0px">Model or Series</div>
<div class="fl" style="left:566.2px;top:197.0px">Style</div>
<div class="fl" style="left:38.4px;top:238.2px">Vehicle Identification Number (VIN) / Serial Number</div>
<div class="fl" style="left:440.0px;top:238.2px">Body Colour</div>
<div class="fl" style="left:566.2px;top:238.2px">Odometer Reading</div>
<div class="fl" style="left:36.8px;top:427.9px">This vehicle was sold for the sum of:</div>
<div class="fl" style="left:588.8px;top:449.9px">Dollars $</div>
<div class="fl" style="left:264.6px;top:467.7px">Sum written in full</div>
<div class="fb" style="left:129.2px;top:490.8px">(Subject to the terms and special conditions which appear in Section 3 on the back of this form)</div>
<div class="fl" style="left:726.6px;top:69.4px;font-size:13.5px;font-weight:700;color:#2e2e2e;line-height:15px">#</div>
</div><!--/FORM-->
</div>
</body>
</html>
